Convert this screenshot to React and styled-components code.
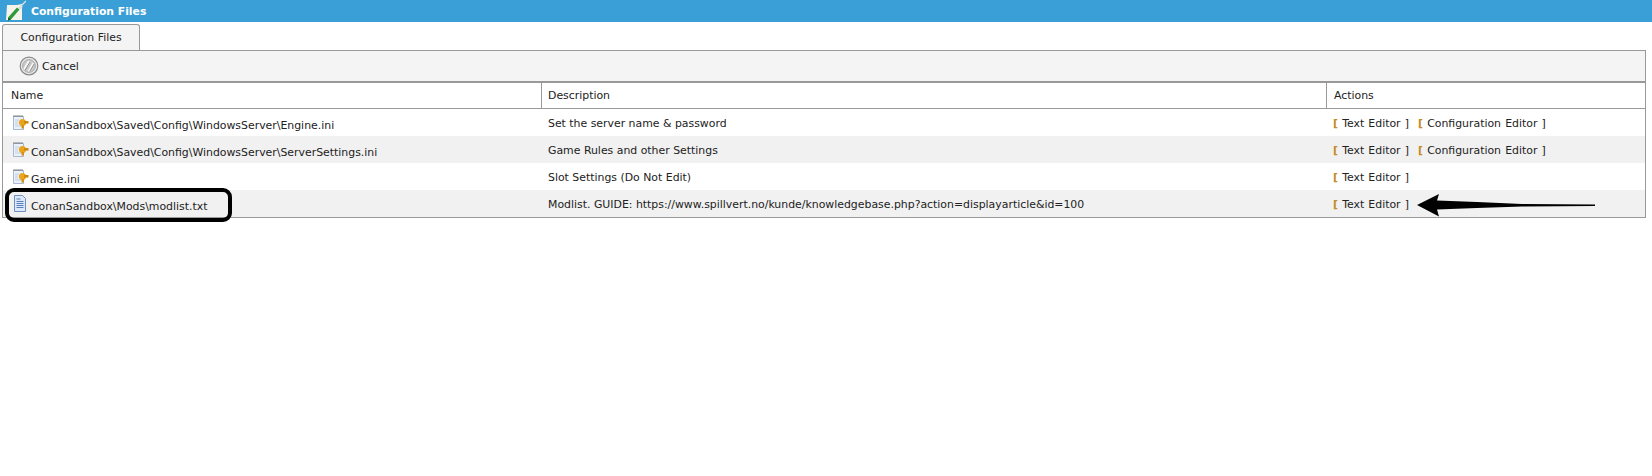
import React from 'react';
import styled, { createGlobalStyle } from 'styled-components';

const GlobalStyle = createGlobalStyle`
    html, body {
        margin: 0;
        padding: 0;
        background: #fff;
    }

    body {
        font-family: "DejaVu Sans", Verdana, sans-serif;
        font-size: 10.9px;
        color: #222;
    }
`;

const Page = styled.div`
    width: 1652px;
    height: 476px;
    overflow: hidden;
`;

const TitleBar = styled.div`
    display: flex;
    align-items: center;
    gap: 5px;
    height: 22px;
    padding-left: 6px;
    background: #3a9fd6;
    color: #fff;
    font-size: 10.8px;
    font-weight: 700;
`;

const Tabs = styled.div`
    display: flex;
    padding: 2px 0 0 2px;
`;

const Tab = styled.div`
    display: flex;
    align-items: center;
    justify-content: center;
    width: 138px;
    height: 26px;
    box-sizing: border-box;
    background: #f4f4f4;
    border: 1px solid #999;
    border-bottom: 0;
    border-radius: 3px 3px 0 0;
`;

const Frame = styled.div`
    position: relative;
    width: 1644px;
    margin-left: 2px;
    box-sizing: border-box;
    border: 1px solid #999;
`;

const Toolbar = styled.div`
    display: flex;
    align-items: center;
    gap: 3px;
    height: 30px;
    padding-left: 16px;
    background: #f4f4f4;
    border-bottom: 2px solid #999;
`;

const Table = styled.table`
    width: 100%;
    border-collapse: separate;
    border-spacing: 0;
    table-layout: fixed;
`;

const HeadCell = styled.th`
    height: 26px;
    padding: 0 0 0 ${p => p.$pad}px;
    box-sizing: border-box;
    width: ${p => p.$width}px;
    text-align: left;
    font-weight: 400;
    border-bottom: 1px solid #999;
    border-left: ${p => (p.$first ? '0' : '1px solid #999')};
`;

const Row = styled.tr`
    height: 27px;
    background: ${p => (p.$striped ? '#f1f1f1' : '#fff')};
`;

const Cell = styled.td`
    padding: 1px 0 0 7px;
    vertical-align: middle;
    white-space: nowrap;
`;

const NameWrap = styled.div`
    display: flex;
    align-items: flex-start;
    gap: 2px;
    padding-left: 2px;
`;

const NameText = styled.span`
    margin-top: 5px;
`;

const Action = styled.span`
    display: inline-block;
    margin-right: 9px;
    word-spacing: .7px;
    color: #222;

    & > i {
        font-style: normal;
        font-weight: 700;
        color: #c58b1f;
    }
`;

const Highlight = styled.div`
    position: absolute;
    left: 2px;
    top: 137px;
    width: 227px;
    height: 34px;
    box-sizing: border-box;
    border: 4px solid #000;
    border-radius: 9px;
`;

const Arrow = styled.svg`
    position: absolute;
    left: 1414px;
    top: 142px;
`;

function PencilIcon() {
    return (
        <svg width="20" height="22" viewBox="0 0 20 22">
            <path d="M1 5h10l5-1v16H0z" fill="#f6f4ea" />
            <path d="M2 17.5L11 7.5l2.5 2L5 19.5l-3 1z" fill="#2f9a3a" />
            <path d="M5 19.5l-3 1 .5-3z" fill="#1d5a22" />
            <path d="M12 8l3-3 2 1.5-3 3z" fill="#dcdcdc" />
            <path d="M16 5l4-4" stroke="#e6e6e6" strokeWidth="1.2" />
        </svg>
    );
}

function CancelIcon() {
    return (
        <svg width="20" height="20" viewBox="0 0 20 20">
            <circle cx="10" cy="10" r="8.8" fill="#e8e8e8" stroke="#8a8a8a" strokeWidth="1.2" />
            <circle cx="10" cy="10" r="6.4" fill="#c9c9c9" stroke="#a0a0a0" strokeWidth=".8" />
            <path d="M5 13.5L10 5M9.5 15.5L14.5 7" stroke="#f8f8f8" strokeWidth="2" />
            <path d="M6.2 14L11 6M10.6 15.5L15.4 7.5" stroke="#7f7f7f" strokeWidth=".8" />
        </svg>
    );
}

function ConfigIcon() {
    return (
        <svg width="17" height="18" viewBox="0 0 17 18">
            <path d="M1.5 2.5h10v13h-10z" fill="#eaf1fa" stroke="#a9b8cf" />
            <path d="M2 1v2M4 1v2M6 1v2M8 1v2M10 1v2" stroke="#666" strokeWidth=".8" />
            <path d="M3 6h4M3 8h3M3 10h3M3 12h6" stroke="#b8c6da" strokeWidth=".8" />
            <circle cx="10.5" cy="8.5" r="3.6" fill="#eaa51c" />
            <path d="M9.5 11h2.4v3.5H9.5z" fill="#d4900f" />
            <path d="M12 7h4.5v2.6H12z" fill="#c98a12" />
        </svg>
    );
}

function TextIcon() {
    return (
        <svg width="17" height="18" viewBox="0 0 17 18">
            <path d="M2.5 .5h8l3 3v13h-11z" fill="#dce8f8" stroke="#6f8fc4" />
            <path d="M4.5 4h4M4.5 6.5h7M4.5 8.5h7M4.5 10.5h7M4.5 12.5h7" stroke="#5a7fbd" strokeWidth="1" />
        </svg>
    );
}

const rows = [
    { name: 'ConanSandbox\\Saved\\Config\\WindowsServer\\Engine.ini', description: 'Set the server name & password', config: true },
    { name: 'ConanSandbox\\Saved\\Config\\WindowsServer\\ServerSettings.ini', description: 'Game Rules and other Settings', config: true },
    { name: 'Game.ini', description: 'Slot Settings (Do Not Edit)' },
    { name: 'ConanSandbox\\Mods\\modlist.txt', description: 'Modlist. GUIDE: https://www.spillvert.no/kunde/knowledgebase.php?action=displayarticle&id=100', text: true },
];

function App() {
    return (
        <Page>
            <GlobalStyle />
            <TitleBar>
                <PencilIcon />
                Configuration Files
            </TitleBar>
            <Tabs>
                <Tab>Configuration Files</Tab>
            </Tabs>
            <Frame>
                <Toolbar>
                    <CancelIcon />
                    Cancel
                </Toolbar>
                <Table>
                    <thead>
                        <tr>
                            <HeadCell $first $pad={8} $width={538}>Name</HeadCell>
                            <HeadCell $pad={6} $width={785}>Description</HeadCell>
                            <HeadCell $pad={7}>Actions</HeadCell>
                        </tr>
                    </thead>
                    <tbody>
                        {rows.map((row, i) => (
                            <Row key={row.name} $striped={i % 2 === 1}>
                                <Cell>
                                    <NameWrap>
                                        {row.text ? <TextIcon /> : <ConfigIcon />}
                                        <NameText>{row.name}</NameText>
                                    </NameWrap>
                                </Cell>
                                <Cell>{row.description}</Cell>
                                <Cell>
                                    <Action><i>[</i> Text Editor ]</Action>
                                    {row.config && <Action><i>[</i> Configuration Editor ]</Action>}
                                </Cell>
                            </Row>
                        ))}
                    </tbody>
                </Table>
                <Highlight />
                <Arrow width="180" height="24" viewBox="0 0 180 24">
                    <path d="M0 12L22 1l-2 6.500 40 1.500 45 2 73 .5v1.500l-73 .5-45 1.500-40 1.500 2 7z" fill="#000" />
                </Arrow>
            </Frame>
        </Page>
    );
}

export default App;
